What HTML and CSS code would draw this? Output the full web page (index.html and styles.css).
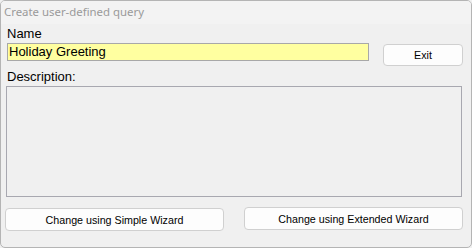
FILE: index.html
```html
<!DOCTYPE html>
<html>
<head>
<meta charset="utf-8">
<link rel="stylesheet" href="styles.css">
</head>
<body>
<div class="window">
  <div class="titlebar">Create user-defined query</div>
  <div class="content">
    <div class="top-row">
      <div class="name-col">
        <div class="label">Name</div>
        <div class="input">Holiday Greeting</div>
      </div>
      <button class="btn exit">Exit</button>
    </div>
    <div class="label desc-label">Description:</div>
    <div class="desc-box"></div>
    <div class="bottom-row">
      <button class="btn wide simple">Change using Simple Wizard</button>
      <button class="btn wide extended">Change using Extended Wizard</button>
    </div>
  </div>
</div>
</body>
</html>
```
FILE: styles.css
```css
html, body {
  margin: 0;
  padding: 0;
  background: #f0f0f0;
}
.window {
  box-sizing: border-box;
  width: 472px;
  height: 248px;
  border: 1px solid #b4b4b4;
  border-radius: 5px;
  background: #f0f0f0;
  overflow: hidden;
  font-family: "Liberation Sans", Arial, sans-serif;
  color: #000;
}
.titlebar {
  height: 23px;
  background: #f3f3f3;
  color: #9a9a9a;
  font-family: "Noto Sans", sans-serif;
  font-size: 11.4px;
  line-height: 22px;
  padding-left: 3px;
  white-space: nowrap;
}
.content {
  padding: 2px 0 0 4px;
}
.top-row {
  display: flex;
  align-items: flex-start;
}
.name-col {
  margin-left: 2px;
  width: 362px;
}
.label {
  font-size: 13px;
  line-height: 16px;
  height: 17px;
}
.input {
  box-sizing: border-box;
  height: 18px;
  border: 1px solid #a8a8a8;
  background: #ffffa0;
  font-size: 13px;
  line-height: 16px;
  padding-left: 1px;
}
.btn {
  box-sizing: border-box;
  height: 22px;
  background: #fdfdfd;
  border: 1px solid #d0d0d0;
  border-radius: 4px;
  font-family: "Liberation Sans", Arial, sans-serif;
  font-size: 10.7px;
  color: #000;
  padding: 0;
  margin: 0;
}
.exit {
  width: 80px;
  margin-left: 14px;
  margin-top: 18px;
}
.desc-label {
  margin-left: 2px;
  margin-top: 3px;
  height: 17px;
}
.desc-box {
  box-sizing: border-box;
  margin-left: 1px;
  width: 456px;
  height: 111px;
  border: 1px solid #a8a8b0;
  background: #f0f0f0;
}
.bottom-row {
  display: flex;
  margin-top: 11px;
}
.wide {
  width: 219px;
  height: 23px;
}
.extended {
  margin-left: 20px;
  margin-top: -1px;
}
```
